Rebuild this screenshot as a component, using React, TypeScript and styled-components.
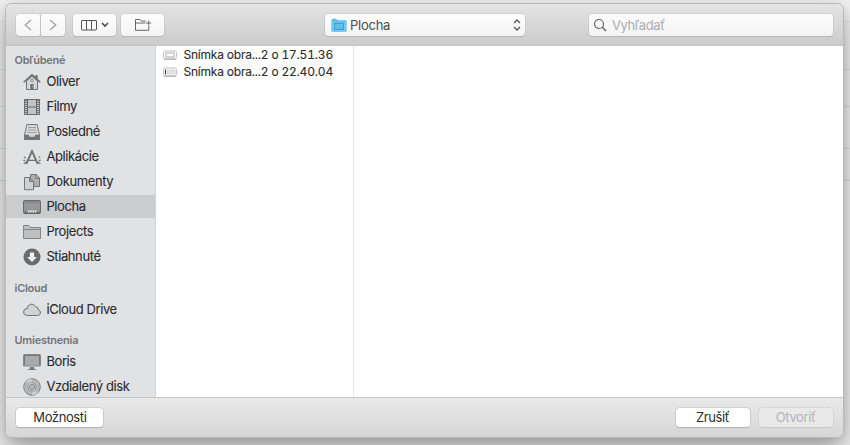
import React from "react";
import styled, { createGlobalStyle } from "styled-components";

const GlobalStyle = createGlobalStyle`
  * { box-sizing: border-box; }
  html, body { margin: 0; height: 445px; overflow: hidden; }
  body { font-family: Inter, "Liberation Sans", sans-serif; font-size: 13px; color: #2b2b2c; }
  svg { display: block; flex: none; }
`;

const Desktop = styled.main`
  width: 850px;
  height: 445px;
  padding: 4px 6px 0;
  overflow: hidden;
  background:
    linear-gradient(#dfe1e2, #dfe1e2) 0 21px / 850px 1px no-repeat,
    linear-gradient(#dadddd, #dadddd) 0 69px / 850px 1px no-repeat,
    linear-gradient(#d8dbdb, #d8dbdb) 0 106px / 850px 1px no-repeat,
    linear-gradient(#d6dada, #d6dada) 0 148px / 850px 1px no-repeat,
    linear-gradient(#d4d8d8, #d4d8d8) 0 180px / 850px 1px no-repeat,
    #efefef;
`;

const Dialog = styled.section`
  width: 837px;
  height: 433px;
  display: flex;
  flex-direction: column;
  overflow: hidden;
  border-radius: 6px;
  background: #fff;
  box-shadow: 0 0 0 1px #b9b9b9, 0 12px 26px rgba(0, 0, 0, 0.36), 0 1px 8px rgba(0, 0, 0, 0.08);
`;

const Toolbar = styled.header`
  height: 42px;
  flex: none;
  display: flex;
  align-items: flex-start;
  padding: 10px 10px 0 10.4px;
  background: linear-gradient(#e4e4e4, #cbcbcb);
  border-bottom: 1px solid #c4c4c4;
`;

const ToolButton = styled.button<{ $w: number; $gap: number; $side?: "left" | "right" }>`
  width: ${(p) => p.$w}px;
  height: 22px;
  margin: 0 ${(p) => p.$gap}px 0 0;
  padding: 0;
  display: flex;
  align-items: center;
  justify-content: center;
  gap: 4px;
  border: 0;
  border-radius: ${(p) => (p.$side === "left" ? "4px 2px 2px 4px" : p.$side === "right" ? "2px 4px 4px 2px" : "4px")};
  background: linear-gradient(#fdfdfd, #f4f4f4);
  box-shadow: 0 0 0 0.5px #c2c2c2, 0 1px 1px #adadad;
`;

const LocationSelect = styled.button`
  width: 200px;
  height: 22px;
  margin: 0 0 0 160.6px;
  padding: 0 4px 0 6px;
  display: flex;
  align-items: center;
  border: 0;
  border-radius: 4px;
  background: linear-gradient(#fdfdfd, #f3f3f3);
  box-shadow: 0 0 0 0.5px #c2c2c2, 0 1px 1px #adadad;
  font: 13px Inter, sans-serif;
  color: #4b4b4b;
`;

const LocationName = styled.span`
  flex: 1;
  margin-left: 3px;
  text-align: left;
  letter-spacing: -0.25px;
`;

const SearchField = styled.label`
  width: 244px;
  height: 22px;
  margin-left: 64px;
  padding-left: 4px;
  display: flex;
  align-items: center;
  gap: 5px;
  border-radius: 4px;
  background: linear-gradient(#fcfcfc, #f3f3f3);
  box-shadow: 0 0 0 0.5px #c2c2c2, 0 1px 1px #adadad;
  color: #acacac;
  letter-spacing: -0.4px;
`;

const Content = styled.div`
  height: 351px;
  flex: none;
  display: flex;
`;

const Sidebar = styled.nav`
  width: 150px;
  flex: none;
  overflow: hidden;
  background: #e1e2e4;
  border-right: 1px solid #d3d4d6;
`;

const SectionTitle = styled.h2<{ $height: number }>`
  height: ${(p) => p.$height}px;
  margin: 0;
  padding: ${(p) => p.$height - 17}px 0 0 8.5px;
  font-size: 11px;
  line-height: 14px;
  font-weight: 600;
  color: #747577;
  letter-spacing: -0.25px;
`;

const Place = styled.div<{ $selected?: boolean }>`
  height: 23px;
  margin-bottom: 2px;
  padding-left: 17px;
  display: flex;
  align-items: center;
  gap: 5.4px;
  line-height: 23px;
  white-space: nowrap;
  background: ${(p) => (p.$selected ? "#cbccce" : "transparent")};
`;

const PlaceName = styled.span`
  letter-spacing: -0.4px;
  -webkit-text-stroke: 0.1px currentColor;
`;

const FileColumn = styled.div`
  width: 198px;
  flex: none;
  border-right: 1px solid #e4e4e4;
`;

const FileRow = styled.div`
  height: 17px;
  padding-left: 7px;
  display: flex;
  align-items: center;
  gap: 6.4px;
  white-space: nowrap;
`;

const FileName = styled.span`
  font-size: 12px;
  line-height: 17px;
  font-feature-settings: "tnum";
  letter-spacing: -0.2px;
  -webkit-text-stroke: 0.1px currentColor;
`;

const Footer = styled.footer`
  flex: 1;
  display: flex;
  align-items: flex-start;
  padding: 10px 10.4px 0;
  border-top: 1px solid #c5c5c5;
  background: linear-gradient(#e9e9e9, #d6d6d6);
`;

const FooterButton = styled.button<{ $w: number; $disabled?: boolean; $push?: boolean }>`
  width: ${(p) => p.$w}px;
  height: 19px;
  padding: 0;
  margin-left: ${(p) => (p.$push ? "auto" : "0")};
  margin-right: ${(p) => (p.$push ? "9px" : "0")};
  border: 0;
  border-radius: 3.5px;
  font: 13px/19px Inter, sans-serif;
  letter-spacing: -0.38px;
  color: ${(p) => (p.$disabled ? "#b4b4b4" : "#2c2c2c")};
  background: ${(p) => (p.$disabled ? "#e9e9e9" : "#fff")};
  box-shadow: 0 0 0 0.5px ${(p) => (p.$disabled ? "#c8c8c8" : "#bcbcbc")}, 0 1px 1px ${(p) => (p.$disabled ? "#c6c6c6" : "#aaa")};
`;

const Chevron = ({ flip }: { flip?: boolean }) => (
  <svg width="10" height="14" viewBox="0 0 10 14" fill="none" stroke="#a0a0a0" strokeWidth="1.3">
    <path d={flip ? "M2 2l5.8 5L2 12" : "M8 2L2.2 7 8 12"} />
  </svg>
);

const icons: Record<string, React.ReactNode> = {
  home: (
    <>
      <path d="M3.5 8v8.5h11V8L9 3z" fill="#d5d6d8" stroke="#707173" />
      <path d="M.7 9.3L9 1.7l8.3 7.6" stroke="#69696b" strokeWidth="1.5" />
      <path d="M13.5 2v4" stroke="#69696b" strokeWidth="2" />
      <circle cx="9" cy="7.3" r="1.4" stroke="#77787a" strokeWidth=".8" />
      <path d="M7.3 11h3.4v5H7.3z" fill="#6c6d6f" />
      <path d="M9.5 12h.9v3h-.9z" fill="#a9aaac" />
    </>
  ),
  film: (
    <>
      <path d="M1.5 1.5h15v15h-15z" fill="#c2c3c5" stroke="#6e6f71" />
      <path d="M4.5 1.5v15M13.5 1.5v15M4.5 9h9" stroke="#66676a" />
      <path d="M3 2v15M15 2v15" stroke="#6e6f71" strokeWidth="1.8" strokeDasharray="1 1" />
    </>
  ),
  recent: (
    <>
      <path d="M3.8 1.5h10.4l2.3 10.5v4.5h-15V12z" fill="#d6d7d9" stroke="#77787a" />
      <path d="M5 4.5h8M4.7 7h8.6M4.3 9.5h9.4" stroke="#97989b" strokeWidth=".9" />
      <path d="M1 11.8h4.5l1.2 2h4.6l1.2-2H17v5H1z" fill="#737476" />
    </>
  ),
  apps: (
    <>
      <path d="M3.3 16L9 3l5.7 13" stroke="#737476" strokeWidth="1.9" />
      <path d="M4.5 12.3h8.5" stroke="#737476" strokeWidth="1.3" />
      <path d="M.3 12.3h2M15.8 12.3h1.9M1 9l1.6.9M15.8 9.5l1.4-.8M.8 15.8L4 13.5M15 13.8l2.3 2" stroke="#737476" strokeWidth="1.3" />
    </>
  ),
  docs: (
    <>
      <path d="M7.5 1.5h5.8l3.2 3.4v8.6h-9z" fill="#adaeb0" stroke="#747577" />
      <path d="M12.8 1.5v4h3.7" stroke="#747577" />
      <path d="M1.5 4.5h5.3l3.7 4v8.2h-9z" fill="#d0d1d3" stroke="#747577" />
      <path d="M6.6 4.5v4h3.9" fill="#97989a" stroke="#747577" />
    </>
  ),
  desktop: (
    <>
      <rect x=".5" y="2.5" width="17" height="13" rx="1" fill="#959698" stroke="#68696b" />
      <path d="M1 4h16" stroke="#777880" />
      <path d="M1 14.5h16" stroke="#68696b" strokeWidth="1.4" />
      <path d="M4.8 13.5h9" stroke="#eee" strokeWidth="1.9" strokeDasharray="1.7 .6" />
    </>
  ),
  folder: (
    <>
      <path d="M.5 14.8V2.5h5.4l1.8 2h9.8v11H.5z" fill="#bfc0c2" stroke="#838486" />
      <path d="M.5 6.5h17" stroke="#838486" />
    </>
  ),
  download: (
    <>
      <circle cx="9" cy="9" r="8.5" fill="#6a6b6d" />
      <path d="M6.9 4.4h4.2v4.7h2.8L9 14 4.1 9.1h2.8z" fill="#f0f0f1" />
    </>
  ),
  cloud: (
    <path d="M3.8 14.5h10.8a2.9 2.9 0 0 0 .7-5.7 3 3 0 0 0-2.8-3.2A4.3 4.3 0 0 0 4.3 7.5 3.5 3.5 0 0 0 3.8 14.5z" fill="#d1d2d4" stroke="#747577" />
  ),
  monitor: (
    <>
      <rect x="1" y="2" width="16" height="10.8" rx=".6" fill="#a8a9ab" stroke="#68696b" strokeWidth="1.5" />
      <path d="M1 13h16" stroke="#c6c7c9" />
      <path d="M7 14h4l.5 2.2h1.8v.8H4.7v-.8h1.8z" fill="#77787a" />
    </>
  ),
  disc: (
    <>
      <circle cx="9" cy="9" r="8.3" fill="#b7b8ba" stroke="#808183" />
      <path d="M9 9L3 3a8 8 0 0 1 6-2zM9 9l6 6a8 8 0 0 1-6 2z" fill="#cbccce" />
      <circle cx="9" cy="9" r="4.8" stroke="#9a9b9d" strokeWidth=".8" />
      <circle cx="9" cy="9" r="2.5" fill="#dddee0" stroke="#77787a" />
      <circle cx="9" cy="9" r=".9" fill="#858688" />
    </>
  ),
};

const PlaceIcon = ({ name }: { name: string }) => (
  <svg width="18" height="18" viewBox="0 0 18 18" fill="none">{icons[name]}</svg>
);

const favourites: [string, string][] = [
  ["home", "Oliver"], ["film", "Filmy"], ["recent", "Posledné"], ["apps", "Aplikácie"],
  ["docs", "Dokumenty"], ["desktop", "Plocha"], ["folder", "Projects"], ["download", "Stiahnuté"],
];

const Thumb = ({ dark }: { dark?: boolean }) => (
  <svg width="14" height="10" viewBox="0 0 14 10" fill="none">
    <rect x=".5" y="1" width="13" height="8" rx="1.4" fill="#fafafa" stroke="#c4c4c4" />
    <path d="M1 9.2h12" stroke="#aaa" />
    {dark ? (
      <>
        <path d="M2.5 2.5v5" stroke="#34465c" strokeWidth="1.1" />
        <path d="M4 3h3v4H4zM8 3h4v4H8z" fill="#e5e8eb" stroke="#c9cdd1" strokeWidth=".6" />
      </>
    ) : <rect x="3" y="3" width="8" height="4" fill="#fff" stroke="#a9a9a9" strokeWidth=".9" />}
  </svg>
);

export default function App() {
  return (
    <>
      <GlobalStyle />
      <Desktop>
        <Dialog>
          <Toolbar>
            <ToolButton $w={24} $gap={1} $side="left"><Chevron /></ToolButton>
            <ToolButton $w={24} $gap={8} $side="right"><Chevron flip /></ToolButton>
            <ToolButton $w={43} $gap={5}>
              <svg width="16" height="11" viewBox="0 0 16 11" fill="none" stroke="#555">
                <rect x=".5" y=".5" width="15" height="9.5" rx=".5" />
                <path d="M5.5 1v9M10.5 1v9" />
              </svg>
              <svg width="8" height="6" viewBox="0 0 8 6" fill="none" stroke="#4b4b4b" strokeWidth="1.6"><path d="M1 1l3 3 3-3" /></svg>
            </ToolButton>
            <ToolButton $w={43} $gap={0}>
              <svg width="18" height="14" viewBox="0 0 18 14" fill="none" stroke="#666">
                <path d="M11.8 3H7.2L6 1.5H1.5v10.8h13.3V8M1.5 5h10M14.7 2.5v5M12.2 5h5" />
              </svg>
            </ToolButton>
            <LocationSelect>
              <svg width="16" height="15" viewBox="0 0 16 15">
                <path d="M.5 2q0-1.2 1.2-1.2h3.5L6.5 2.3h7.8q1.2 0 1.2 1.2v9.3q0 1-1 1h-13q-1 0-1-1z" fill="#65bce9" />
                <path d="M.5 4h15v8.8q0 1-1 1h-13q-1 0-1-1z" fill="#70caf5" />
                <rect x="3.5" y="5.3" width="9" height="6.2" fill="#65bdeb" stroke="#409ccf" />
              </svg>
              <LocationName>Plocha</LocationName>
              <svg width="8" height="14" viewBox="0 0 8 14" fill="none" stroke="#555" strokeWidth="1.3"><path d="M1 5l3-3 3 3M1 9l3 3 3-3" /></svg>
            </LocationSelect>
            <SearchField>
              <svg width="14" height="14" viewBox="0 0 14 14" fill="none" stroke="#5f5f5f" strokeWidth="1.1"><circle cx="6" cy="6" r="4.5" /><path d="M9.3 9.3l3.7 3.7" strokeWidth="1.4" /></svg>
              <span>Vyhľadať</span>
            </SearchField>
          </Toolbar>
          <Content>
            <Sidebar>
              <SectionTitle $height={24}>Obľúbené</SectionTitle>
              {favourites.map(([icon, name]) => (
                <Place key={name} $selected={name === "Plocha"}><PlaceIcon name={icon} /><PlaceName>{name}</PlaceName></Place>
              ))}
              <SectionTitle $height={28}>iCloud</SectionTitle>
              <Place><PlaceIcon name="cloud" /><PlaceName>iCloud Drive</PlaceName></Place>
              <SectionTitle $height={27}>Umiestnenia</SectionTitle>
              <Place><PlaceIcon name="monitor" /><PlaceName>Boris</PlaceName></Place>
              <Place><PlaceIcon name="disc" /><PlaceName>Vzdialený disk</PlaceName></Place>
            </Sidebar>
            <FileColumn>
              <FileRow><Thumb /><FileName>Snímka obra...2 o 17.51.36</FileName></FileRow>
              <FileRow><Thumb dark /><FileName>Snímka obra...2 o 22.40.04</FileName></FileRow>
            </FileColumn>
          </Content>
          <Footer>
            <FooterButton $w={87}>Možnosti</FooterButton>
            <FooterButton $w={74} $push>Zrušiť</FooterButton>
            <FooterButton $w={74} $disabled>Otvoriť</FooterButton>
          </Footer>
        </Dialog>
      </Desktop>
    </>
  );
}
